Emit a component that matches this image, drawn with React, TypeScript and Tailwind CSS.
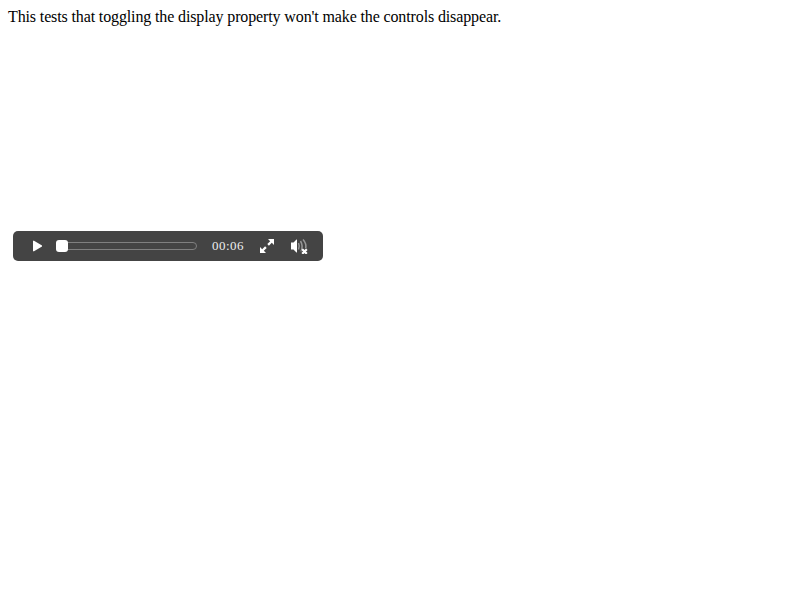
function PlayIcon() {
  return (
    <svg className="ml-5 block h-3 w-[10px]" viewBox="0 0 10 12" fill="white">
      <path d="M0 .8H1L9 5.500V6.500L1 11.200H0Z" />
    </svg>
  );
}

function FullscreenIcon() {
  return (
    <svg className="block size-4" viewBox="0 0 16 16" fill="white">
      <path d="M9 1h6v6L12.800 4.800 9.900 7.700 8.300 6.100 11.200 3.200ZM7 15H1V9L3.200 11.200 6.100 8.300 7.700 9.900 4.800 12.800Z" />
    </svg>
  );
}

function MutedIcon() {
  return (
    <svg className="block h-4 w-[18px]" viewBox="0 0 18 16" fill="none">
      <path d="M1 4.500h2.500L6.500 1.500H7v13H6.500L3.500 11.500H1Z" fill="white" />
      <g stroke="white" strokeOpacity=".45" strokeWidth="1.5">
        <path d="M8.500 5q1.500 3 0 6.500" />
        <path d="M10.500 3q3 5 .5 10.500" />
        <path d="M13 1.500q3.700 4 2.700 9" />
      </g>
      <path d="m12.500 11.500 4 4m0-4-4 4" stroke="#444444" strokeWidth="3.800" />
      <path d="m12.200 11.200 4.600 4.600m0-4.600-4.600 4.600" stroke="white" strokeWidth="2.200" />
    </svg>
  );
}

export default function App() {
  return (
    <main className="h-[600px] w-[800px] bg-white px-2 pt-2 font-['Liberation_Serif',serif] text-base leading-[18px] text-black">
      <p className="tracking-[-0.127px]">This tests that toggling the display property won't make the controls disappear.</p>
      <div className="mt-[205px] ml-[5px] flex h-[30px] w-[310px] items-center rounded-[5px] bg-[#444444]">
        <button aria-label="Play"><PlayIcon /></button>
        <div className="ml-[13px] flex h-2 w-[141px] items-center rounded-full border border-[#808080]">
          <div className="-ml-px h-3 w-3 shrink-0 rounded-[3px] bg-white" />
        </div>
        <time className="ml-[15px] w-8 text-[13px] leading-[18px] tracking-[0.5px] text-[#eeeeee]">00:06</time>
        <button className="ml-[15px]" aria-label="Fullscreen"><FullscreenIcon /></button>
        <button className="ml-[15px]" aria-label="Unmute"><MutedIcon /></button>
      </div>
    </main>
  );
}
